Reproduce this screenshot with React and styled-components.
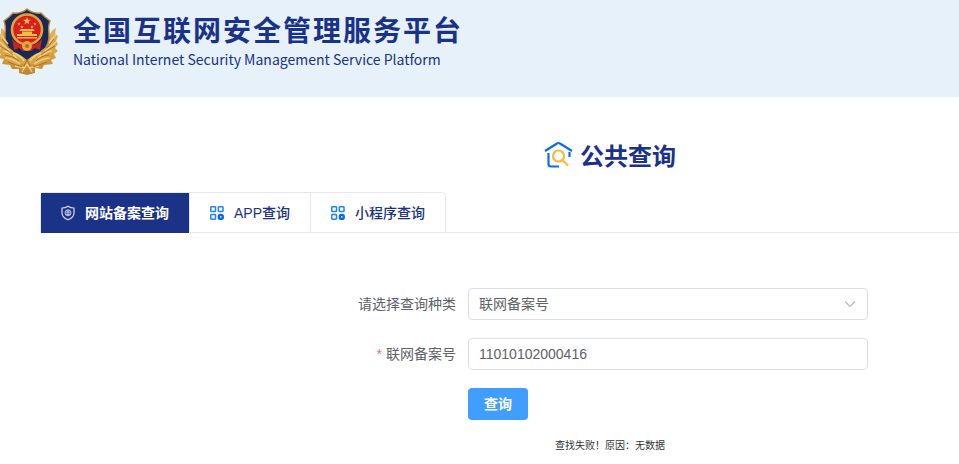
import React, { useState } from "react";
import styled, { createGlobalStyle } from "styled-components";

const GlobalStyle = createGlobalStyle`
  *, *::before, *::after { box-sizing: border-box; }
  body {
    margin: 0;
    background: #fff;
    color: #606266;
    font: 14px/20px "Liberation Sans", "Noto Sans CJK SC", sans-serif;
  }
  button, input, select { font: inherit; margin: 0; }
`;

const Header = styled.header`
  display: flex;
  align-items: flex-start;
  gap: 13px;
  padding: 8px 0 20px;
  background: #e6f1fa;
  color: #1a3288;
`;

const Brand = styled.div`
  padding-top: 1px;
`;

const BrandName = styled.h1`
  margin: 0;
  font: 700 28px/40px "Noto Sans CJK SC", sans-serif;
  letter-spacing: 2px;
`;

const BrandSubtitle = styled.p`
  margin: 0;
  font: 400 14px/20px "Noto Sans CJK SC", sans-serif;
`;

const Main = styled.main`
  padding: 39px 0 0 40px;
`;

const Centered = styled.section`
  padding-left: 221px;
`;

const Heading = styled.h2`
  display: flex;
  align-items: center;
  justify-content: center;
  gap: 6px;
  margin: 0 0 18px;
  color: #1a3288;
  font: 700 24px/38px "Noto Sans CJK SC", sans-serif;
`;

const TabBar = styled.div`
  display: flex;
  border-bottom: 1px solid #e4e7ed;
`;

const TabGroup = styled.div`
  display: flex;
  margin-bottom: -1px;
  border: 1px solid #e4e7ed;
  border-radius: 4px 4px 0 0;
`;

const Tab = styled.button`
  display: flex;
  align-items: center;
  gap: 8px;
  height: 40px;
  margin-bottom: -1px;
  padding: 0 20px 0 18px;
  border: 0;
  border-left: ${(p) => (p.$divided ? "1px solid #e4e7ed" : "0")};
  background: ${(p) => (p.$active ? "#1a3288" : "transparent")};
  color: ${(p) => (p.$active ? "#fff" : "#1a3288")};
  font-weight: ${(p) => (p.$active ? 700 : 500)};
  cursor: pointer;
`;

const Form = styled.form`
  display: grid;
  grid-template-columns: 104px minmax(0, 400px);
  column-gap: 12px;
  row-gap: 18px;
  justify-content: center;
  padding-top: 55px;
`;

const Label = styled.label`
  line-height: 32px;
  text-align: right;
  white-space: nowrap;
`;

const Required = styled.span`
  margin-right: 4px;
  color: #f56c6c;
`;

const SelectBox = styled.div`
  display: grid;
  align-items: center;

  & > * { grid-area: 1 / 1; }
  & > svg { justify-self: end; margin-right: 11px; pointer-events: none; }
`;

const Select = styled.select`
  width: 100%;
  height: 32px;
  padding: 0 30px 0 10px;
  border: 1px solid #dcdfe6;
  border-radius: 4px;
  appearance: none;
  background: #fff;
  color: #606266;
`;

const Input = styled.input`
  width: 100%;
  height: 32px;
  padding: 0 10px;
  border: 1px solid #dcdfe6;
  border-radius: 4px;
  background: #fff;
  color: #606266;
`;

const SubmitButton = styled.button`
  grid-column: 2;
  justify-self: start;
  height: 32px;
  padding: 0 16px;
  border: 0;
  border-radius: 4px;
  background: #409eff;
  color: #fff;
  font-weight: 700;
  cursor: pointer;
`;

const Result = styled.p`
  margin: 18px 0 0;
  color: #303133;
  font-size: 10px;
  line-height: 16px;
  text-align: center;
`;

const STAR = "M0-4 1-1.2H4L1.6.5 2.5 3.4 0 1.7-2.5 3.4-1.6.5-4-1.2H-1Z";

function Emblem() {
  return (
    <svg width="60" height="69" viewBox="0 0 60 69" aria-hidden="true">
      <defs>
        <linearGradient id="gold" x1="0" y1="0" x2="0" y2="1">
          <stop offset="0" stopColor="#dfb25a" />
          <stop offset=".5" stopColor="#dba545" />
          <stop offset="1" stopColor="#bd842f" />
        </linearGradient>
      </defs>
      <path
        d="M1 20Q5 22 6 28L9 40H46L49 29Q51 22 56 20L55 26 58 28 56 33 58 36 55 40 58 43 54 46 56 50 51 52 53 56 44 57 42 61 35 60 35 65 27 67 19 65 19 61 12 61 10 57 2 56 4 51-1 50 1 46-3 44 1 40-3 36 0 33-2 27 1 26Z"
        fill="url(#gold)"
      />
      <path
        d="M27 1Q33 6 41 5L45 9 50 13Q48 18 49 25 50 36 43 43 36 49 27 53 18 49 11 43 4 36 5 25 6 18 4 13L9 9 13 5Q21 6 27 1Z"
        fill="#172957"
        stroke="#b98a3c"
        strokeWidth="1.5"
      />
      <circle cx="27" cy="21.500" r="15" fill="#d71f20" stroke="#e0a23a" strokeWidth="2.600" />
      <g fill="#f2be4b">
        <path d={STAR} transform="translate(27 13)" />
        <path d={STAR} transform="translate(19 16) scale(.45)" />
        <path d={STAR} transform="translate(22 19) scale(.45)" />
        <path d={STAR} transform="translate(32 19) scale(.45)" />
        <path d={STAR} transform="translate(35 16) scale(.45)" />
        <path d="M21 21h12l2 2H19ZM22 23.500h10v2.500h5v2H17v-2h5ZM17 29h20v1.500H17Z" />
      </g>
      <path d="M12 31Q18 37 23 37H31Q37 37 42 31L40 42 35 40 31 43H23L19 40 14 42Z" fill="#cc2222" />
      <circle cx="27" cy="38" r="5" fill="#e5a83b" />
      <circle cx="27" cy="38" r="2" fill="#b86b22" />
      <path
        d="M4 40Q10 39 14 44 20 46 27 52 34 46 40 44 44 39 50 40L48 52 38 58 27 55 16 58 6 52Z"
        fill="#d9a346"
      />
      <path
        d="M1 27 8 36M0 34 10 43M3 43Q10 44 17 50M5 50Q12 50 20 56M13 45Q20 47 24 53M56 26 49 35M56 34 45 43M52 43Q45 44 38 50M50 50Q43 50 34 56M41 45Q34 47 30 53M15 58 25 60M39 58 29 60M22 64 27 56 32 64"
        fill="none"
        stroke="#f1d083"
        strokeWidth="1.400"
      />
      <path
        d="M2 31 9 40M0 38Q8 42 13 47M5 47Q14 48 19 53M8 54 22 59M54 31 47 40M55 38Q47 42 41 47M49 47Q40 48 36 53M47 54 33 59M24 58 27 52 30 58"
        fill="none"
        stroke="#a66d27"
        strokeWidth=".9"
      />
    </svg>
  );
}

function HouseSearchIcon() {
  return (
    <svg width="30" height="28" viewBox="0 0 30 28" fill="none" aria-hidden="true">
      <g stroke="#0a6cf5" strokeWidth="2.2">
        <path d="M1 10 13 2.5Q14.5 1.5 16 2.5L28 10" />
        <path d="M4.500 12v11Q4.500 25.500 7 25.500H15M25.500 11v5" />
      </g>
      <g stroke="#fbb93e" strokeWidth="2.2">
        <circle cx="14.500" cy="15" r="5.500" />
        <path d="M18.500 19 24 24.500" />
      </g>
    </svg>
  );
}

function ShieldIcon() {
  return (
    <svg width="18" height="16" viewBox="-1 0 18 16" fill="none" stroke="#d5daea" aria-hidden="true">
      <path d="M8 1.200Q10.500 3 14 3V8Q14 12.400 8 14.800 2 12.400 2 8V3Q5.500 3 8 1.200Z" strokeWidth="1.200" />
      <g strokeWidth=".8">
        <circle cx="8" cy="7.800" r="3" />
        <path d="M5 7.800h6M8 4.800v6M6 6h4M6 9.600h4" />
      </g>
    </svg>
  );
}

function GridIcon() {
  return (
    <svg width="18" height="16" viewBox="0 0 18 16" fill="none" stroke="#2383f5" strokeWidth="1.500" aria-hidden="true">
      <rect x="2.800" y="1.800" width="4.700" height="4.700" rx=".6" />
      <rect x="10.300" y="1.800" width="4.700" height="4.700" rx=".6" />
      <rect x="2.800" y="9.500" width="4.700" height="4.700" rx=".6" />
      <circle cx="12.800" cy="11.900" r="2" stroke="#0868ec" strokeWidth="2.400" />
    </svg>
  );
}

function ChevronIcon() {
  return (
    <svg width="14" height="14" viewBox="0 0 14 14" fill="none" stroke="#b4b7bd" aria-hidden="true">
      <path d="M2 4.500 7 9.500 12 4.500" strokeWidth="1.100" />
    </svg>
  );
}

const TABS = [
  { name: "网站备案查询", Icon: ShieldIcon },
  { name: "APP查询", Icon: GridIcon },
  { name: "小程序查询", Icon: GridIcon },
];

export default function App() {
  const [active, setActive] = useState(0);
  const [code, setCode] = useState("11010102000416");

  return (
    <>
      <GlobalStyle />
      <Header>
        <Emblem />
        <Brand>
          <BrandName>全国互联网安全管理服务平台</BrandName>
          <BrandSubtitle>National Internet Security Management Service Platform</BrandSubtitle>
        </Brand>
      </Header>
      <Main>
        <Centered>
          <Heading>
            <HouseSearchIcon />
            公共查询
          </Heading>
        </Centered>
        <TabBar>
          <TabGroup role="tablist">
            {TABS.map(({ name, Icon }, i) => (
              <Tab
                key={name}
                type="button"
                role="tab"
                aria-selected={i === active}
                $active={i === active}
                $divided={i > 0}
                onClick={() => setActive(i)}
              >
                <Icon />
                {name}
              </Tab>
            ))}
          </TabGroup>
        </TabBar>
        <Centered>
          <Form onSubmit={(e) => e.preventDefault()}>
            <Label htmlFor="kind">请选择查询种类</Label>
            <SelectBox>
              <Select id="kind">
                <option>联网备案号</option>
              </Select>
              <ChevronIcon />
            </SelectBox>
            <Label htmlFor="code">
              <Required>*</Required>
              联网备案号
            </Label>
            <Input id="code" required value={code} onChange={(e) => setCode(e.target.value)} />
            <SubmitButton type="submit">查询</SubmitButton>
          </Form>
          <Result role="status">查找失败！原因：无数据</Result>
        </Centered>
      </Main>
    </>
  );
}
